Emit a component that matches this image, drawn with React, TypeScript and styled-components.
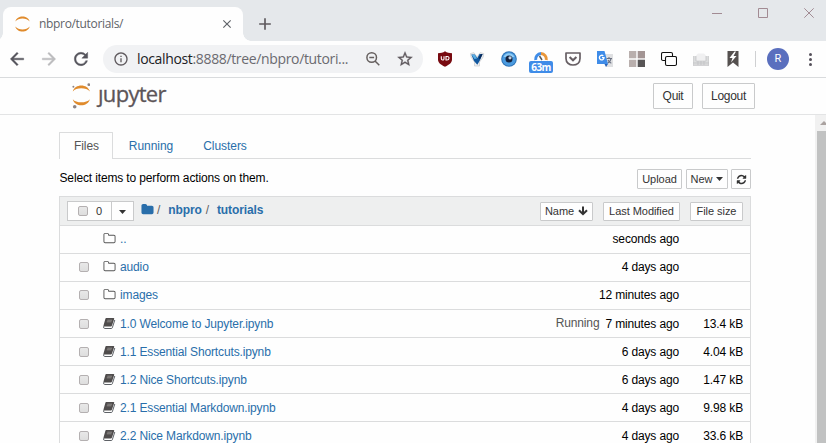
import React from 'react';
import styled, { createGlobalStyle } from 'styled-components';
import {
  MdArrowBack,
  MdArrowForward,
  MdRefresh,
  MdInfoOutline,
  MdStarBorder,
  MdClose,
  MdAdd,
} from 'react-icons/md';

const Global = createGlobalStyle`
  * { box-sizing: border-box; }
  body { margin: 0; background: #fff; font-family: "Liberation Sans", Arial, sans-serif; }
`;

const Window = styled.div`
  width: 826px;
  height: 443px;
  overflow: hidden;
  display: flex;
  flex-direction: column;
  background: #fefefe;
  font-size: 12px;
  color: #000;
`;

/* Browser chrome */
const TabStrip = styled.div`
  height: 41px;
  flex: none;
  display: flex;
  padding: 7px 0 0 3px;
  background: #e5e8eb;
`;

const BrowserTab = styled.div`
  position: relative;
  width: 240px;
  height: 34px;
  display: flex;
  align-items: center;
  padding: 0 9px 0 12px;
  border-radius: 8px 8px 0 0;
  background: #fefefe;
  color: #5f6368;
  &::before,
  &::after {
    content: '';
    position: absolute;
    bottom: 0;
    width: 8px;
    height: 8px;
  }
  &::before {
    left: -8px;
    background: radial-gradient(circle at 0 0, transparent 7.5px, #fefefe 8px);
  }
  &::after {
    right: -8px;
    background: radial-gradient(circle at 100% 0, transparent 7.5px, #fefefe 8px);
  }
  svg {
    flex: none;
  }
`;

const TabTitle = styled.span`
  flex: 1;
  margin-left: 9px;
  font: 12px/16px "Open Sans", sans-serif;
  letter-spacing: -0.33px;
`;

const NewTab = styled.div`
  display: flex;
  align-items: center;
  height: 34px;
  margin-left: 12px;
  color: #5f5a5e;
`;

const WindowControls = styled.div`
  display: flex;
  gap: 36px;
  margin-left: auto;
  padding-right: 12px;
  svg {
    display: block;
  }
`;

const Toolbar = styled.div`
  height: 37px;
  flex: none;
  display: flex;
  align-items: center;
  border-bottom: 1px solid #d9dbdd;
`;

const NavButton = styled.span<{ $faded?: boolean }>`
  width: 32px;
  display: flex;
  justify-content: center;
  color: ${(p) => (p.$faded ? '#bcbcbe' : '#55545c')};
  path:not([fill='none']) {
    stroke: currentColor;
    stroke-width: 0.5px;
  }
  path[fill='none'] {
    stroke: none;
  }
`;

const NavGroup = styled.div`
  display: flex;
  width: 103px;
  padding-left: 1px;
`;

const Omnibox = styled.div`
  width: 320px;
  height: 28px;
  display: flex;
  align-items: center;
  padding: 0 9px 0 10px;
  border-radius: 14px;
  background: #f1f2f4;
  color: #5f5a5e;
  svg {
    flex: none;
  }
`;

const Url = styled.span`
  flex: 1;
  margin-left: 8px;
  white-space: nowrap;
  font: 14px/20px "Open Sans", sans-serif;
  letter-spacing: -0.35px;
  color: #6b6a70;
  b {
    font-weight: 400;
    color: #202124;
  }
`;

const StarSlot = styled.span`
  display: flex;
  margin-left: 14px;
  path:not([fill='none']) {
    stroke: currentColor;
    stroke-width: 0.4px;
  }
  path[fill='none'] {
    stroke: none;
  }
`;

const Extensions = styled.div`
  display: flex;
  margin-left: 6px;
`;

const Extension = styled.div`
  position: relative;
  width: 32px;
  height: 28px;
  display: flex;
  align-items: center;
  justify-content: center;
`;

const Badge = styled.span`
  position: absolute;
  left: 4px;
  top: 16px;
  width: 24px;
  height: 12px;
  border-radius: 2px;
  background: #3f8ce8;
  color: #fff;
  text-align: center;
  font: bold 10px/12px "Open Sans", sans-serif;
  letter-spacing: -0.6px;
`;

const Divider = styled.span`
  width: 1px;
  height: 16px;
  margin-left: 6px;
  background: #cfd0d2;
`;

const Avatar = styled.span`
  width: 22px;
  height: 22px;
  margin: 0 0 0 11px;
  border-radius: 50%;
  background: #5a6fbe;
  color: #fff;
  text-align: center;
  font: 11px/22px Roboto, sans-serif;
`;

const MenuDots = styled.span`
  width: 3px;
  display: flex;
  flex-direction: column;
  gap: 2px;
  margin-left: 20px;
  i {
    width: 3px;
    height: 3px;
    border-radius: 50%;
    background: #55505a;
  }
`;

/* Notebook page */
const Header = styled.header`
  height: 37px;
  flex: none;
  display: flex;
  align-items: flex-start;
  padding: 5px 71px 0 72px;
  border-bottom: 1px solid #e3e4e5;
`;

const Brand = styled.div`
  display: flex;
  flex: 1;
  height: 27px;
  svg {
    flex: none;
  }
`;

const Wordmark = styled.span`
  margin: -5px 0 0 8px;
  font: 22px/30px "Open Sans", sans-serif;
  letter-spacing: -0.7px;
  color: #5c5558;
  -webkit-text-stroke: 0.3px #5c5558;
`;

const DotlessJ = styled.span`
  display: inline-block;
  clip-path: inset(11px -4px 0 -6px);
`;

const Button = styled.button<{ $w: number; $h?: number; $size?: number }>`
  flex: none;
  display: flex;
  align-items: center;
  justify-content: center;
  gap: 4px;
  width: ${(p) => p.$w}px;
  height: ${(p) => p.$h ?? 20}px;
  padding: 0;
  border: 1px solid #c9cacb;
  border-radius: 1px;
  background: #fefefe;
  color: #333;
  font: ${(p) => p.$size ?? 11}px/14px "Liberation Sans", Arial, sans-serif;
  letter-spacing: ${(p) => (p.$size ? -0.3 : -0.05)}px;
  white-space: nowrap;
`;

const HeaderButtons = styled.div`
  display: flex;
  gap: 9px;
`;

const Body = styled.div`
  flex: 1;
  min-height: 0;
  display: flex;
  justify-content: space-between;
  letter-spacing: -0.14px;
`;

const Main = styled.main`
  width: 692px;
  margin-left: 59px;
  padding-top: 17px;
`;

const Tabs = styled.nav`
  height: 27px;
  display: flex;
  border-bottom: 1px solid #dbdcdd;
`;

const Tab = styled.a<{ $active?: boolean; $w: number }>`
  width: ${(p) => p.$w}px;
  height: 27px;
  padding-left: 1px;
  text-align: center;
  line-height: 26px;
  letter-spacing: -0.05px;
  border: 1px solid ${(p) => (p.$active ? '#dbdcdd' : 'transparent')};
  border-bottom: 0;
  border-radius: 1px 1px 0 0;
  background: ${(p) => (p.$active ? '#fefefe' : 'none')};
  color: ${(p) => (p.$active ? '#555' : '#296eaa')};
`;

const Actions = styled.div`
  height: 37px;
  display: flex;
  align-items: flex-start;
  padding-top: 10px;
`;

const Hint = styled.span`
  flex: 1;
  line-height: 18px;
  padding-left: 0.5px;
`;

const ActionButtons = styled.div`
  display: flex;
  gap: 4px;
  button:last-child {
    margin-left: -1px;
  }
`;

const FileList = styled.div`
  border: 1px solid #dbdcdd;
  border-bottom: 0;
`;

const ListHeader = styled.div`
  height: 28px;
  display: flex;
  align-items: center;
  padding: 0 7px;
  background: #eeefef;
`;

const SelectGroup = styled.div`
  display: flex;
  width: 67px;
  height: 20px;
  border: 1px solid #c9cacb;
  background: #fefefe;
  color: #333;
  font-size: 11px;
`;

const SelectCount = styled.div`
  width: 44px;
  display: flex;
  align-items: center;
  gap: 8px;
  padding-left: 10px;
  border-right: 1px solid #c9cacb;
`;

const SelectMenu = styled.div`
  flex: 1;
  display: flex;
  align-items: center;
  justify-content: center;
  padding-top: 2px;
`;

const Checkbox = styled.span<{ $hidden?: boolean }>`
  flex: none;
  width: 10px;
  height: 10px;
  border: 1px solid #b4b0b1;
  border-radius: 2px;
  background: linear-gradient(#e8e8e8, #dedede);
  visibility: ${(p) => (p.$hidden ? 'hidden' : 'visible')};
`;

const Crumbs = styled.div`
  flex: 1;
  display: flex;
  align-items: center;
  margin-left: 7px;
  height: 24px;
  color: #5e5e5e;
  padding-bottom: 3px;
  letter-spacing: -0.1px;
`;

const Slash = styled.span`
  margin-left: 3px;
`;

const Crumb = styled.a<{ $gap?: number }>`
  margin: 0 ${(p) => p.$gap ?? 0}px 0 8px;
  font-weight: bold;
  color: #296eaa;
`;

const SortButtons = styled.div`
  display: flex;
  gap: 10px;
`;

const Row = styled.div<{ $notebook?: boolean }>`
  height: 28px;
  display: flex;
  align-items: center;
  padding: 0 7px ${(p) => (p.$notebook ? 0 : 2)}px 19px;
  border-top: 1px solid #dbdcdd;
  line-height: 16px;
`;

const IconSlot = styled.span`
  width: 13px;
  height: 13px;
  margin: 0 4px 0 14px;
  color: #555;
  svg {
    display: block;
  }
`;

const FileName = styled.a`
  flex: 1;
  color: #296eaa;
`;

const Status = styled.span`
  margin: -2px 6px 0 0;
  color: #555;
`;

const Size = styled.span`
  width: 64px;
  text-align: right;
`;

const Scrollbar = styled.div`
  width: 11px;
  padding: 6px 0 0 2px;
  background: #f1f1f1;
  overflow: hidden;
`;

const ScrollUp = styled.div`
  width: 0;
  height: 0;
  margin: 0 0 6px 3px;
  border: 4px solid transparent;
  border-top: 0;
  border-bottom-color: #aaa2a0;
`;

const ScrollThumb = styled.div`
  height: 320px;
  background: #c1c2c2;
`;

const FOLDER =
  'M1728 608v704q0 92-66 158t-158 66h-1216q-92 0-158-66t-66-158v-960q0-92 66-158t158-66h320q92 0 158 66t66 158v32h672q92 0 158 66t66 158z';
const FOLDER_O =
  'M1600 1312v-704q0-40-28-68t-68-28h-704q-40 0-68-28t-28-68v-64q0-40-28-68t-68-28h-320q-40 0-68 28t-28 68v960q0 40 28 68t68 28h1216q40 0 68-28t28-68zm128-704v704q0 92-66 158t-158 66h-1216q-92 0-158-66t-66-158v-960q0-92 66-158t158-66h320q92 0 158 66t66 158v32h672q92 0 158 66t66 158z';
const REFRESH =
  'M1639 1056q0 5-1 7-64 268-268 434.500t-478 166.500q-146 0-282.500-55t-243.500-157l-129 129q-19 19-45 19t-45-19-19-45v-448q0-26 19-45t45-19h448q26 0 45 19t19 45-19 45l-137 137q71 66 161 102t187 36q134 0 250-65t186-179q11-17 53-117 8-23 30-23h192q13 0 22.500 9.500t9.500 22.500zm25-800v448q0 26-19 45t-45 19h-448q-26 0-45-19t-19-45 19-45l138-138q-148-137-349-137-134 0-250 65t-186 179q-11 17-53 117-8 23-30 23h-199q-13 0-22.500-9.500t-9.500-22.500v-7q65-268 270-434.500t480-166.500q146 0 284 55.500t245 156.500l130-129q19-19 45-19t45 19 19 45z';

const Glyph = ({ d, size, color = 'currentColor' }: { d: string; size: number; color?: string }) => (
  <svg width={size} height={size} viewBox="0 0 1792 1792" fill={color}>
    <path d={d} />
  </svg>
);

const Book = () => (
  <svg width="13" height="13" viewBox="0 0 13 13">
    <path d="M3.200 1h7.300q1 0 .7 1L9 8.500q-.3.900-1.200.9H1q-.7 0-.5-.8L2.400 1.800Q2.600 1 3.200 1z" fill="#4f4c4c" />
    <path d="M4.300 3.200h4.700M3.800 4.800h4.700" stroke="#9c9896" strokeWidth=".8" />
    <path d="M.7 9.200q-.5 2.300 1 2.300h6.600q.8 0 1-.7L11.800 3" fill="none" stroke="#5d6166" strokeWidth="1" />
  </svg>
);

const Caret = () => (
  <svg width="7" height="4" viewBox="0 0 7 4">
    <path d="M0 0h7L3.500 4z" fill="#333" />
  </svg>
);

const ArrowDown = () => (
  <svg width="10" height="10" viewBox="0 0 10 10" fill="none" stroke="#333" strokeWidth="2">
    <path d="M5 .5v7.500M1 4.200l4 4 4-4" />
  </svg>
);

const JupyterMark = () => (
  <svg width="15" height="16" viewBox="0 0 15 16" fill="#e08b2c">
    <path d="M.3 5.500C2-1.300 13-1.300 14.700 5.500 11.500 1.600 3.500 1.600.3 5.500z" />
    <path d="M.3 10.500c1.700 6.800 12.700 6.800 14.400 0-3.200 3.900-11.200 3.900-14.400 0z" />
  </svg>
);

const JupyterLogo = () => (
  <svg width="18" height="27" viewBox="0 0 18 27">
    <path d="M.8 8.500c2-8 15-8 17 0C14.500 4.300 4 4.300.8 8.500z" fill="#e08b2c" />
    <path d="M.8 16.200c2 8 15 8 17 0-3.300 4.200-13.800 4.200-17 0z" fill="#e08b2c" />
    <g fill="#8b8385">
      <circle cx="1.400" cy="3.700" r="1" />
      <circle cx="16.800" cy="1.700" r="1.400" />
      <circle cx="2.700" cy="23.800" r="1.800" />
    </g>
  </svg>
);

const ZoomOut = () => (
  <svg width="16" height="16" viewBox="0 0 16 16" fill="none" stroke="#66605f" strokeWidth="1.500">
    <circle cx="5.700" cy="6.500" r="4.800" />
    <path d="m9 10 4.300 4.200M3.300 6.500h4.800" />
  </svg>
);

const Shield = () => (
  <svg width="16" height="16" viewBox="0 0 16 16">
    <path d="M8 .3c2 1.400 4.300 1.900 7 1.900v6.300c0 3-2.300 5-7 7.300-4.700-2.300-7-4.300-7-7.300V2.200c2.700 0 5-.5 7-1.900z" fill="#780a10" />
    <path d="M4.300 5.300v2.300q0 1.400 1.400 1.400T7 7.600V5.300M9 5.500V9h1q2 0 2-1.800T10 5.500z" fill="none" stroke="#fff" strokeWidth="1.100" />
  </svg>
);

const Vee = () => (
  <svg width="16" height="16" viewBox="0 0 16 16">
    <path d="M1.500 2.500 5 1.700 8 6l3-4.300 3.700.8-.5 3.500-3.700 5v4H5.500v-4L2 6z" fill="#eeeff0" stroke="#c9cacd" strokeWidth=".7" />
    <path d="M2.300 3.500h3.500L8.300 7l2.200-4h3.200l-3 6.800-2.400 4L5 10z" fill="#12589f" />
    <path d="M2.600 3.700h3.200L8 7.500 5.500 8z" fill="#59aee4" />
    <path d="M9.500 7 12 3l1.500.3-2.500 5z" fill="#0b2855" />
  </svg>
);

const Eye = () => (
  <svg width="16" height="16" viewBox="0 0 16 16">
    <circle cx="8" cy="8" r="7.800" fill="#2e72b5" />
    <circle cx="8" cy="8" r="6.800" fill="#4b9be0" />
    <path d="M2.500 6C4 1.300 11 .5 13.500 6z" fill="#8fcbf5" />
    <circle cx="8" cy="8" r="3.500" fill="#14233f" />
    <circle cx="9" cy="6.800" r="1.600" fill="#c2cede" />
  </svg>
);

const Gauge = () => (
  <svg width="16" height="16" viewBox="0 0 16 16" fill="none">
    <path d="M2.700 9A5.500 5.500 0 0 1 8 2.600" stroke="#3f8ce8" strokeWidth="3" />
    <path d="M8 2.600A5.500 5.500 0 0 1 13.300 9" stroke="#e8963b" strokeWidth="3" />
    <path d="M6.500 5 9 9" stroke="#555" strokeWidth="1.500" />
  </svg>
);

const Pocket = () => (
  <svg width="16" height="16" viewBox="0 0 16 16" fill="none" stroke="#675f64">
    <path d="M1 2h14v5.500c0 4-3 6.500-7 6.500s-7-2.500-7-6.500z" strokeWidth="1.700" strokeLinejoin="round" />
    <path d="M4.600 6 8 9.200 11.400 6" strokeWidth="2.100" />
  </svg>
);

const Translate = () => (
  <svg width="16" height="16" viewBox="0 0 16 16">
    <path d="M6 3h10v13H9z" fill="#dfe0e2" />
    <path d="M9.500 7.500h5.500M12 6v1.500M14 8c-.5 2-2 3.500-3.500 4.300M11 9c.7 1.700 2 2.700 3.300 3.300" stroke="#6a7080" strokeWidth="1.100" fill="none" />
    <path d="M0 0h7.500l3.500 13H0z" fill="#3f8ce8" />
    <path d="M7.500 13h3.500L9 16z" fill="#2b63b5" />
    <path d="M6.300 4.900A2.300 2.300 0 1 0 7 6.700H5" stroke="#fff" strokeWidth="1.300" fill="none" />
  </svg>
);

const Squares = () => (
  <svg width="16" height="16" viewBox="0 0 16 16" fill="#b9afad">
    <path d="M0 0h7.300v7.300H0zM0 8.700h7.300V16H0z" />
    <path d="M8.700 0H16v7.300H8.700z" fill="#a39594" />
    <path d="M8.700 8.700H16V16H8.700z" fill="#585556" />
  </svg>
);

const Windows = () => (
  <svg width="16" height="16" viewBox="0 0 16 16" fill="#fff" stroke="#111" strokeWidth="1.100">
    <rect x=".5" y="1.500" width="11" height="8" rx="1.500" />
    <rect x="4.500" y="5.500" width="11" height="9" rx="1.500" />
  </svg>
);

const Tray = () => (
  <svg width="16" height="16" viewBox="0 0 16 16">
    <path d="M0 5h3v5h10V5h3v9.500H0z" fill="#dcddde" />
    <path d="M3 9.500V4.500l2-2h6l2 2v5z" fill="#f0f0f1" />
    <path d="M0 5v9.300h16V5M3 5v5h10V5M0 12h16M5 10v4M8 10v4M11 10v4" stroke="#bfbfc1" strokeWidth=".7" fill="none" />
  </svg>
);

const Ribbon = () => (
  <svg width="16" height="16" viewBox="0 0 16 16">
    <path d="M2.500 0h11v16L8 11.500 2.500 16z" fill="#55504f" />
    <path d="M9.500.5 4.500 7h3l-1.500 4.500L11.500 5h-3L11 .5z" fill="#fff" />
  </svg>
);

const EXTENSIONS = [Shield, Vee, Eye, Gauge, Pocket, Translate, Squares, Windows, Tray, Ribbon];

type Item = { name: string; kind: 'up' | 'folder' | 'notebook'; modified: string; size?: string; running?: boolean };

const ITEMS: Item[] = [
  { name: '..', kind: 'up', modified: 'seconds ago' },
  { name: 'audio', kind: 'folder', modified: '4 days ago' },
  { name: 'images', kind: 'folder', modified: '12 minutes ago' },
  { name: '1.0 Welcome to Jupyter.ipynb', kind: 'notebook', modified: '7 minutes ago', size: '13.4 kB', running: true },
  { name: '1.1 Essential Shortcuts.ipynb', kind: 'notebook', modified: '6 days ago', size: '4.04 kB' },
  { name: '1.2 Nice Shortcuts.ipynb', kind: 'notebook', modified: '6 days ago', size: '1.47 kB' },
  { name: '2.1 Essential Markdown.ipynb', kind: 'notebook', modified: '4 days ago', size: '9.98 kB' },
  { name: '2.2 Nice Markdown.ipynb', kind: 'notebook', modified: '4 days ago', size: '33.6 kB' },
];

export default function App() {
  return (
    <Window>
      <Global />
      <TabStrip>
        <BrowserTab>
          <JupyterMark />
          <TabTitle>nbpro/tutorials/</TabTitle>
          <MdClose size={14} />
        </BrowserTab>
        <NewTab>
          <MdAdd size={20} />
        </NewTab>
        <WindowControls>
          <svg width="10" height="12"><path d="M0 6.500h10" stroke="#a28b93" /></svg>
          <svg width="10" height="12"><path d="M.5 1.500h9v9h-9z" stroke="#a28b93" fill="none" /></svg>
          <svg width="10" height="12" viewBox="0 0 10 12"><path d="m.3 1.300 9.400 9.400m0-9.400L.3 10.700" stroke="#a28b93" /></svg>
        </WindowControls>
      </TabStrip>
      <Toolbar>
        <NavGroup>
          <NavButton><MdArrowBack size={20} /></NavButton>
          <NavButton $faded><MdArrowForward size={20} /></NavButton>
          <NavButton><MdRefresh size={20} /></NavButton>
        </NavGroup>
        <Omnibox>
          <MdInfoOutline size={16} />
          <Url><b>localhost</b>:8888/tree/nbpro/tutori...</Url>
          <ZoomOut />
          <StarSlot><MdStarBorder size={18} /></StarSlot>
        </Omnibox>
        <Extensions>
          {EXTENSIONS.map((Icon, i) => (
            <Extension key={i}>
              <Icon />
              {Icon === Gauge && <Badge>63m</Badge>}
            </Extension>
          ))}
        </Extensions>
        <Divider />
        <Avatar>R</Avatar>
        <MenuDots><i /><i /><i /></MenuDots>
      </Toolbar>
      <Header>
        <Brand>
          <JupyterLogo />
          <Wordmark><DotlessJ>j</DotlessJ>upyter</Wordmark>
        </Brand>
        <HeaderButtons>
          <Button $w={40} $h={26} $size={12}>Quit</Button>
          <Button $w={53} $h={26} $size={12}>Logout</Button>
        </HeaderButtons>
      </Header>
      <Body>
        <Main>
          <Tabs>
            <Tab $active $w={54}>Files</Tab>
            <Tab $w={75}>Running</Tab>
            <Tab $w={73}>Clusters</Tab>
          </Tabs>
          <Actions>
            <Hint>Select items to perform actions on them.</Hint>
            <ActionButtons>
              <Button $w={45}>Upload</Button>
              <Button $w={42}>New <Caret /></Button>
              <Button $w={20}><Glyph d={REFRESH} size={11} /></Button>
            </ActionButtons>
          </Actions>
          <FileList>
            <ListHeader>
              <SelectGroup>
                <SelectCount><Checkbox />0</SelectCount>
                <SelectMenu><Caret /></SelectMenu>
              </SelectGroup>
              <Crumbs>
                <Glyph d={FOLDER} size={13} color="#296eaa" />
                <Slash>/</Slash>
                <Crumb $gap={4}>nbpro</Crumb>/
                <Crumb>tutorials</Crumb>
              </Crumbs>
              <SortButtons>
                <Button $w={53} $h={19}>Name <ArrowDown /></Button>
                <Button $w={77} $h={19}>Last Modified</Button>
                <Button $w={53} $h={19}>File size</Button>
              </SortButtons>
            </ListHeader>
            {ITEMS.map((item) => (
              <Row key={item.name} $notebook={item.kind === 'notebook'}>
                <Checkbox $hidden={item.kind === 'up'} />
                <IconSlot>
                  {item.kind === 'notebook' ? <Book /> : <Glyph d={FOLDER_O} size={13} />}
                </IconSlot>
                <FileName>{item.name}</FileName>
                {item.running && <Status>Running</Status>}
                <span>{item.modified}</span>
                <Size>{item.size}</Size>
              </Row>
            ))}
          </FileList>
        </Main>
        <Scrollbar>
          <ScrollUp />
          <ScrollThumb />
        </Scrollbar>
      </Body>
    </Window>
  );
}
